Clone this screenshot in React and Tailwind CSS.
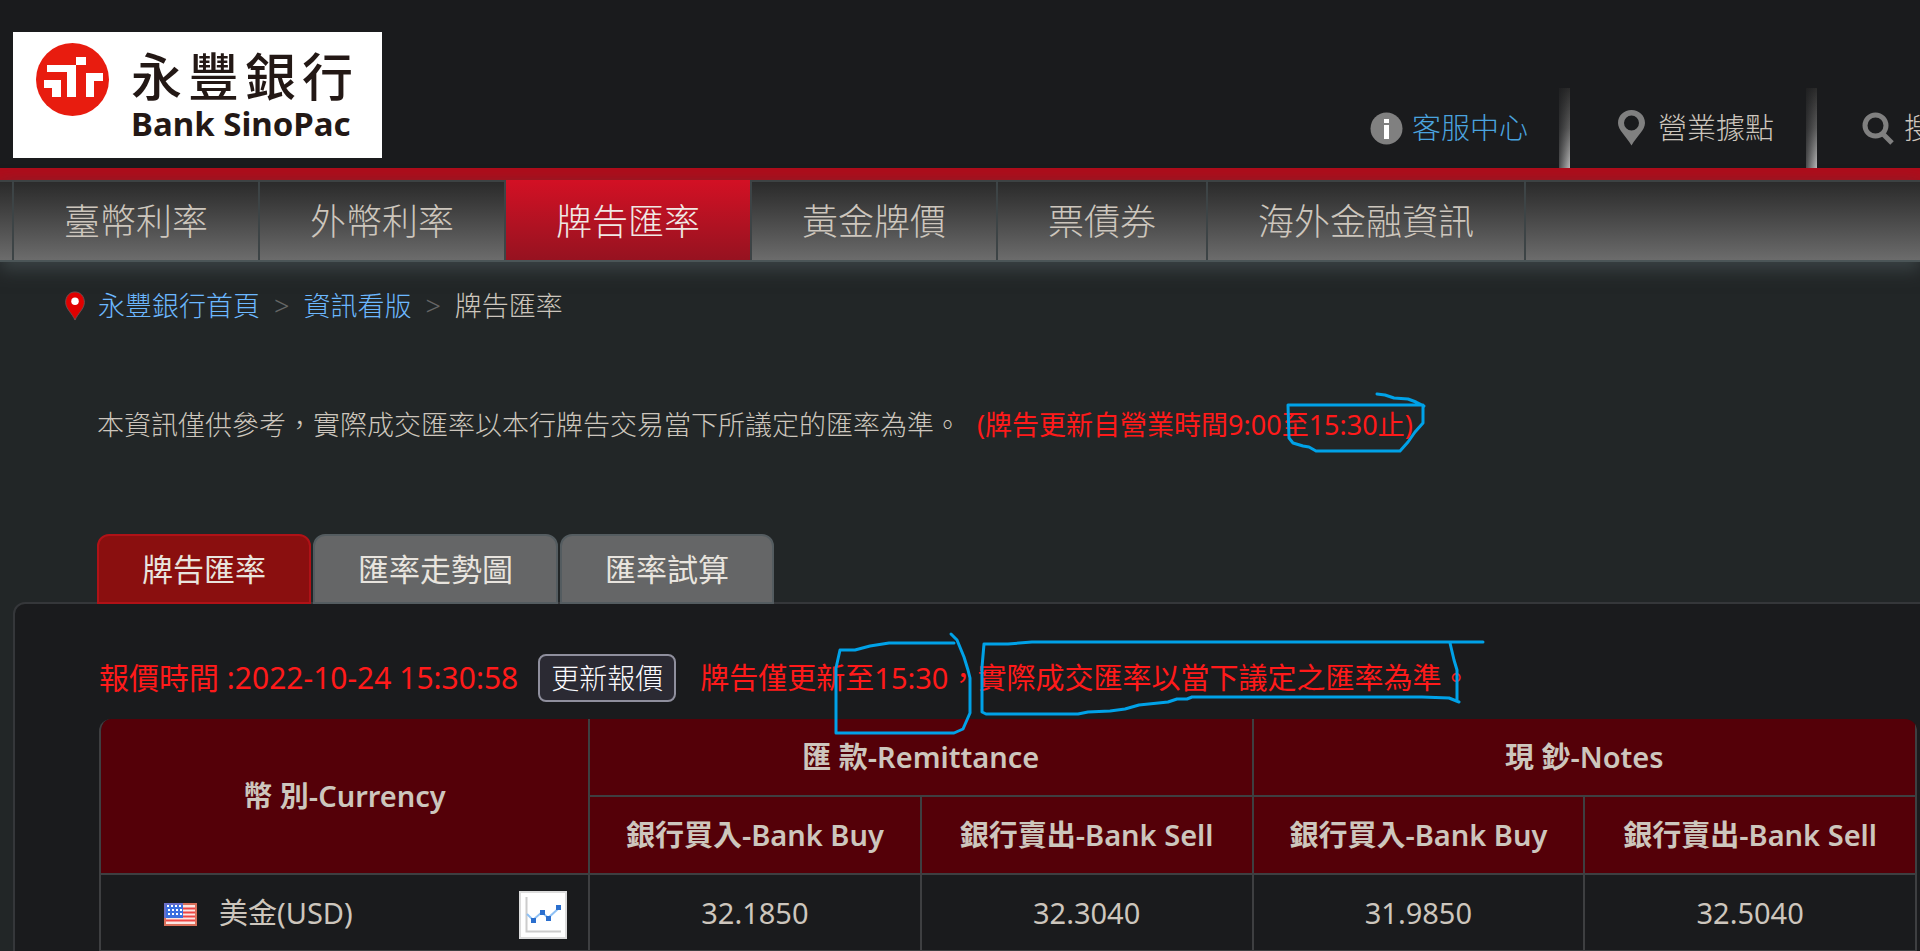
import React from 'react';

const navItems = ['臺幣利率', '外幣利率', '牌告匯率', '黃金牌價', '票債券', '海外金融資訊'];
const tabs = ['牌告匯率', '匯率走勢圖', '匯率試算'];
const rates = [{ name: '美金(USD)', values: ['32.1850', '32.3040', '31.9850', '32.5040'] }];

const Logo = () => (
  <a href="#" className="flex h-[126px] w-[369px] shrink-0 bg-white pl-[23px] pt-[11px] text-[#231815]">
    <svg width="73" height="73" viewBox="0 0 73 73" className="shrink-0" aria-hidden="true">
      <circle cx="36.5" cy="36.5" r="36.5" fill="#e81c0f" />
      <g fill="#fff">
        <path d="M40 14h10v8H40z" />
        <path d="M11 22h29v32h-9V29H11z" />
        <path d="M8 37h17v17h-9v-9H8z" />
        <path d="M50 30h17v8H58v16h-8z" />
      </g>
    </svg>
    <span className="ml-[22px] flex flex-col pt-1">
      <span className="flex w-[222px] justify-between text-[51px] font-medium leading-[58px]">
        <span>永</span><span>豐</span><span>銀</span><span>行</span>
      </span>
      <span className="font-['Noto_Sans'] text-[33px] font-bold leading-[38px]">Bank SinoPac</span>
    </span>
  </a>
);

const Divider = () => (
  <span className="h-20 w-[11px] shrink-0 bg-[linear-gradient(to_right,#1a1b1db0,transparent),linear-gradient(to_bottom,#2b2b2b,#5c5c5c_50%,#b8b8b8)]" />
);

const Header = () => (
  <header className="flex justify-between overflow-hidden border-b-12 border-[#ae0d1b] bg-[#1a1b1d] pl-[13px] pt-8">
    <Logo />
    <nav className="-mr-[42px] mt-14 flex shrink-0 items-center text-[29px] leading-10">
      <a href="#" className="mr-[31px] flex items-center gap-[9px] text-[#4aa3df]">
        <svg width="33" height="33" viewBox="0 0 33 33" aria-hidden="true">
          <circle cx="16.5" cy="16.5" r="16" fill="#808080" />
          <path d="M14 7h5v4h-5zM14 13h5v14h-5z" fill="#fff" />
        </svg>
        客服中心
      </a>
      <Divider />
      <a href="#" className="ml-12 mr-8 flex items-center gap-[13px]">
        <svg width="27" height="36" viewBox="0 0 27 36" aria-hidden="true">
          <path fillRule="evenodd" fill="#808080" d="M13.500 0C6 0 0 5.500 0 13c0 7 8 13 13.500 22.500C19 26 27 20 27 13 27 5.500 21 0 13.500 0zm0 5.500a7.500 7.500 0 1 1 0 15 7.500 7.500 0 0 1 0-15z" />
        </svg>
        營業據點
      </a>
      <Divider />
      <a href="#" className="ml-[45px] flex items-center gap-[10px]">
        <svg width="32" height="33" viewBox="0 0 32 33" fill="none" stroke="#808080" aria-hidden="true">
          <circle cx="13.5" cy="13.5" r="10.5" strokeWidth="5" />
          <path d="M21 22l9 9" strokeWidth="5" />
        </svg>
        搜尋
      </a>
    </nav>
  </header>
);

const MainNav = () => (
  <nav className="border-b-2 border-[#4b5557] bg-linear-to-b from-[#292929] to-[#6c6c6c] pl-3 shadow-[inset_0_2px_#3d4243,0_8px_16px_#3a4244]">
    <ul className="flex h-20 border-l-2 border-[#3d4446] text-[36px] leading-[76px]">
      {navItems.map((item) => (
        <li
          key={item}
          className={
            item === '牌告匯率'
              ? 'border-r-2 border-[#3d4446] bg-linear-to-b from-[#d31024] to-[#961220] text-[#f0e8e4]'
              : 'border-r-2 border-[#3d4446]'
          }
        >
          <a href="#" className="block px-[50px] pt-1">{item}</a>
        </li>
      ))}
    </ul>
  </nav>
);

const MapPin = () => (
  <svg width="22" height="30" viewBox="0 0 22 32" aria-hidden="true">
    <path d="M11 1C5 1 1 6 1 12c0 7 7 12 10 19C14 24 21 19 21 12 21 6 17 1 11 1z" fill="#e00000" stroke="#6b5050" />
    <circle cx="11" cy="11" r="4" fill="#fff" />
  </svg>
);

const Flag = () => (
  <svg width="33" height="23" viewBox="0 0 33 23" className="mt-1" role="img" aria-label="USD">
    <rect width="33" height="23" fill="#fbe6e3" />
    <path d="M2 5.500h29M2 9.500h29M2 13.500h29M2 17.500h29" stroke="#ee4444" strokeWidth="2" />
    <rect width="19" height="15" fill="#3b6fe0" />
    <path d="M3 3h15M4 7h14M4 11h14" stroke="#fff" strokeWidth="2" strokeDasharray="2 2" />
    <path d="M19 1h13v21H1v-7" fill="none" stroke="#d9705a" strokeWidth="2" />
    <path d="M1 15V1h18" fill="none" stroke="#6a6fc8" strokeWidth="2" />
  </svg>
);

const ChartIcon = () => (
  <svg width="48" height="48" viewBox="0 0 48 48" aria-hidden="true">
    <rect x="1" y="1" width="46" height="46" fill="#fff" stroke="#dcdcdc" strokeWidth="2" />
    <path d="M7.500 6v34.500H42" fill="none" stroke="#ccc" strokeWidth="2" />
    <path d="M8 23l6 6 9-8 6 6 11-10" fill="none" stroke="#8fc1f5" strokeWidth="2" />
    <path d="M12 27h5v5h-5zM21 19h5v5h-5zM27 25h5v5h-5zM37 14h5v5h-5z" fill="#2b6fce" />
  </svg>
);

// hand drawn highlights on top of the page
const Ink = () => (
  <svg
    className="pointer-events-none absolute left-0 top-0"
    width="1500"
    height="760"
    fill="none"
    stroke="#00a2e8"
    strokeWidth="3"
    strokeLinejoin="round"
    strokeLinecap="round"
    aria-hidden="true"
  >
    <path d="M1377 394L1385 395L1394 398L1408 399L1416 402L1424 406M1288 405H1423V423L1415 432L1408 442L1400 451H1316L1309 447L1303 446L1293 443L1289 438L1288 405" />
    <path d="M951 634L957 640L964 657L968 670L970 678V713L963 729L954 733H836V668L840 650H855L870 646L889 643H954" />
    <path d="M1483 642H1032L1008 644H984L982 667V712L986 714H1078L1088 712L1110 711L1125 709L1139 705L1168 702L1177 699L1187 699L1192 697H1422L1449 698L1459 702M1450 643L1454 660L1457 670V700" />
  </svg>
);

const RateTable = () => (
  <table className="mt-[17px] w-full table-fixed border-separate border-spacing-0 overflow-hidden rounded-t-xl border-l-2 border-[#3e3f41] text-[29px] leading-9">
    <colgroup>
      <col className="w-[489px]" />
      <col />
      <col />
      <col />
      <col />
    </colgroup>
    <thead className="bg-[#540008]">
      <tr className="h-[78px]">
        <th rowSpan={2} className="border-b-2 border-r-2 border-[#3e3f41] font-semibold">幣 別-Currency</th>
        <th colSpan={2} className="border-b-2 border-r-2 border-[#3e3f41] font-semibold">匯 款-Remittance</th>
        <th colSpan={2} className="border-b-2 border-r-2 border-[#3e3f41] font-semibold">現 鈔-Notes</th>
      </tr>
      <tr className="h-[78px]">
        {['銀行買入-Bank Buy', '銀行賣出-Bank Sell', '銀行買入-Bank Buy', '銀行賣出-Bank Sell'].map((label, i) => (
          <th key={i} className="border-b-2 border-r-2 border-[#3e3f41] font-semibold">{label}</th>
        ))}
      </tr>
    </thead>
    <tbody>
      {rates.map((rate) => (
        <tr key={rate.name} className="h-[77px] text-center font-normal">
          <td className="border-b-2 border-r-2 border-[#3e3f41] pl-[63px] pr-[21px]">
            <div className="flex items-center">
              <Flag />
              <a href="#" className="ml-[22px]">{rate.name}</a>
              <button type="button" className="ml-auto mt-1" aria-label="chart"><ChartIcon /></button>
            </div>
          </td>
          {rate.values.map((value, i) => (
            <td key={i} className="border-b-2 border-r-2 border-[#3e3f41]">{value}</td>
          ))}
        </tr>
      ))}
    </tbody>
  </table>
);

export default function App() {
  return (
    <div className="relative overflow-hidden bg-[#222627] font-['Noto_Sans','Noto_Sans_CJK_TC',sans-serif] font-light text-[#cdc6bd]">
      <Header />
      <MainNav />

      <main className="pl-[13px]">
        <div className="flex items-center pl-[51px] pt-6 text-[27px] leading-10">
          <MapPin />
          <a href="#" className="ml-3 text-[#6cb8ff]">永豐銀行首頁</a>
          <span className="mx-[14px] text-[#666]">&gt;</span>
          <a href="#" className="text-[#6cb8ff]">資訊看版</a>
          <span className="mx-[14px] text-[#666]">&gt;</span>
          <span>牌告匯率</span>
        </div>

        <p className="flex gap-4 pl-[84px] pt-[79px] text-[27px] leading-10">
          <span>本資訊僅供參考，實際成交匯率以本行牌告交易當下所議定的匯率為準。</span>
          <span className="font-normal text-[#ff1a1a]">(牌告更新自營業時間9:00至15:30止)</span>
        </p>

        <div className="relative -mb-[2px] mt-[89px] flex gap-[2px] pl-[84px] text-[31px] leading-[66px] text-[#e8e4de]">
          {tabs.map((tab, i) => (
            <button
              key={tab}
              type="button"
              className={
                i === 0
                  ? 'rounded-t-xl border-2 border-[#b01217] bg-[#8a0f0f] px-[43px] font-normal'
                  : 'rounded-t-xl border-2 border-[#545c60] bg-[#656667] px-[43px] font-normal'
              }
            >
              {tab}
            </button>
          ))}
        </div>

        <section className="-mr-8 rounded-t-xl border-2 border-[#35373a] bg-[#1a1b1d] pl-[84px] pr-[33px] pt-[50px]">
          <div className="flex items-center text-[29px] font-normal leading-[48px] text-[#ff1a1a]">
            <span className="text-[30px]">報價時間 :2022-10-24 15:30:58</span>
            <button type="button" className="ml-5 rounded-lg border-2 border-[#8f8f9d] bg-[#2b2a33] px-[11px] text-[28px] font-light leading-[44px] text-[#fbfbfe]">
              更新報價
            </button>
            <span className="ml-6">牌告僅更新至15:30，實際成交匯率以當下議定之匯率為準。</span>
          </div>
          <RateTable />
        </section>
      </main>
      <Ink />
    </div>
  );
}
